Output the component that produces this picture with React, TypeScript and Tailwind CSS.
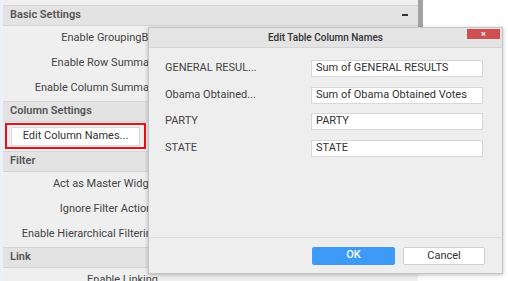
import React from "react";

type Row = { label: string };

const basicRows: Row[] = [
  { label: "Enable GroupingBar" },
  { label: "Enable Row Summary" },
  { label: "Enable Column Summary" },
];

const filterRows: Row[] = [
  { label: "Act as Master Widget" },
  { label: "Ignore Filter Actions" },
  { label: "Enable Hierarchical Filtering" },
];

const columns = [
  { name: "GENERAL RESUL...", value: "Sum of GENERAL RESULTS" },
  { name: "Obama Obtained...", value: "Sum of Obama Obtained Votes" },
  { name: "PARTY", value: "PARTY" },
  { name: "STATE", value: "STATE" },
];

function SectionHeader({ title, collapse }: { title: string; collapse?: boolean }) {
  return (
    <div className="flex h-[21px] shrink-0 items-center justify-between border-y border-[#d6d6d6] bg-[#e3e3e3] pl-[7px] pr-[10px] text-[11px] font-semibold text-[#555]">
      <span>{title}</span>
      {collapse && <span className="mb-[2px] h-[2px] w-[6px] bg-[#333]" />}
    </div>
  );
}

function SettingRow({ label }: Row) {
  return (
    <div className="flex h-[25px] shrink-0 items-center">
      <div className="w-[155px] whitespace-nowrap text-right text-[11px] text-[#444]">{label}</div>
    </div>
  );
}

export default function App() {
  return (
    <div
      className="relative flex h-[281px] w-[508px] overflow-hidden bg-white"
      style={{ fontFamily: "Roboto, 'Noto Sans', sans-serif" }}
    >
      <div className="w-[3px] bg-[#eaf1f8]" />
      {/* property panel */}
      <div className="flex w-[415px] flex-col bg-[#efefef] pt-[5px]">
        <SectionHeader title="Basic Settings" collapse />
        {basicRows.map((r) => (
          <SettingRow key={r.label} label={r.label} />
        ))}
        <SectionHeader title="Column Settings" />
        <div className="flex h-[29px] shrink-0 items-start pl-[2px] pt-[1px]">
          <div className="flex h-[26px] w-[141px] items-center justify-center border-2 border-[#e8101a] px-[4px]">
            <button className="h-[19px] w-full border border-[#d9d9d9] bg-white text-[11px] text-[#333]">
              Edit Column Names...
            </button>
          </div>
        </div>
        <SectionHeader title="Filter" />
        {filterRows.map((r) => (
          <SettingRow key={r.label} label={r.label} />
        ))}
        <SectionHeader title="Link" />
        <SettingRow label="Enable Linking" />
      </div>
      <div className="flex flex-col">
        <div className="h-[28px] w-[5px] bg-[#a3a3a3]" />
      </div>
      <div className="flex-1 bg-white" />

      {/* dialog */}
      <div className="absolute left-[148px] top-[27px] flex h-[247px] w-[355px] flex-col border border-[#c4c4c4] bg-[#eeeeee] shadow-[0_1px_4px_rgba(0,0,0,0.25)]">
        <div className="relative flex h-[20px] items-center justify-center border-b border-[#d4d4d4] bg-[#e4e4e4] text-[10px] font-medium text-[#333]">
          Edit Table Column Names
          <button className="absolute right-[2px] top-[1px] flex h-[10px] w-[33px] items-center justify-center bg-[#cf5050] text-[9px] leading-none text-white">
            ×
          </button>
        </div>
        <div className="flex flex-1 flex-col gap-[9.5px] pl-[16px] pt-[12px]">
          {columns.map((c) => (
            <div key={c.name} className="flex h-[17px] items-center">
              <div className="w-[146px] text-[11px] text-[#444]">{c.name}</div>
              <div className="flex h-[17px] w-[172px] items-center border border-[#d8d8d8] bg-white pl-[4px] text-[11px] text-[#333]">
                {c.value}
              </div>
            </div>
          ))}
        </div>
        <div className="flex h-[36px] items-center justify-end gap-[8px] border-t border-[#dcdcdc] pr-[17px]">
          <button className="h-[18px] w-[83px] rounded-[2px] bg-[#3d9bf7] text-[11px] font-medium text-white">
            OK
          </button>
          <button className="h-[18px] w-[82px] rounded-[2px] border border-[#d0d0d0] bg-white text-[11px] text-[#333]">
            Cancel
          </button>
        </div>
      </div>
    </div>
  );
}
